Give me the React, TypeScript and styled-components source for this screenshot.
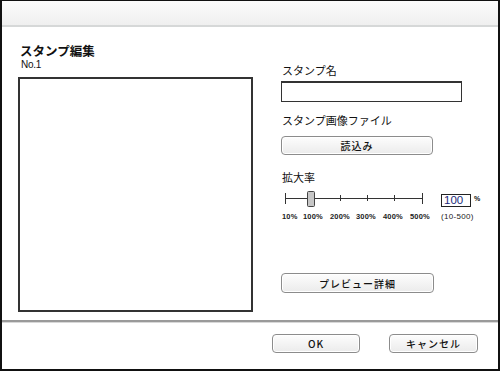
import React from "react";
import styled, { createGlobalStyle } from "styled-components";

const GlobalStyle = createGlobalStyle`
  html, body {
    margin: 0;
    padding: 0;
    background: #ffffff;
  }
  body {
    font-family: "Noto Sans CJK JP", "Liberation Sans", sans-serif;
    color: #111;
  }
`;

const Frame = styled.div`
  width: 500px;
  height: 371px;
  box-sizing: border-box;
  border: 2px solid #111;
  border-top-width: 1px;
  display: flex;
  flex-direction: column;
  background: #fff;
  overflow: hidden;
`;

const TitleBar = styled.div`
  height: 24px;
  flex-shrink: 0;
  background: linear-gradient(#fbfbfb, #efefef);
  border-bottom: 2px solid #d6d8d8;
`;

const Body = styled.div`
  height: 293px;
  flex-shrink: 0;
  display: flex;
  align-items: flex-start;
  padding: 16px 0 0 16px;
  box-sizing: border-box;
`;

const LeftCol = styled.div`
  width: 235px;
  display: flex;
  flex-direction: column;
`;

const Title = styled.div`
  font-size: 12.5px;
  line-height: 14px;
  height: 15px;
  font-weight: 700;
  margin-left: 2px;
  margin-top: 1px;
  overflow: visible;
`;

const SubTitle = styled.div`
  font-family: "Liberation Sans", sans-serif;
  font-size: 10px;
  line-height: 11px;
  margin-left: 3px;
  letter-spacing: -0.3px;
`;

const PreviewBox = styled.div`
  margin-top: 7px;
  width: 235px;
  height: 235px;
  box-sizing: border-box;
  border: 2px solid #333;
  background: #fff;
`;

const RightCol = styled.div`
  margin-left: 28px;
  margin-top: 20px;
  width: 200px;
  display: flex;
  flex-direction: column;
`;

const FieldLabel = styled.div<{ $mt?: number }>`
  font-size: 11px;
  line-height: 14px;
  margin-top: ${(p) => p.$mt ?? 0}px;
  margin-left: 1px;
`;

const TextBox = styled.div`
  margin-top: 4px;
  width: 181px;
  height: 21px;
  box-sizing: border-box;
  border: 1px solid #333;
  border-top-width: 2px;
  background: #fff;
`;

const Button = styled.button<{ $w: number; $h: number; $mt?: number }>`
  width: ${(p) => p.$w}px;
  height: ${(p) => p.$h}px;
  margin-top: ${(p) => p.$mt ?? 0}px;
  padding: 0;
  box-sizing: border-box;
  border: 1px solid #8c8c8c;
  border-radius: 4px;
  background: linear-gradient(#fdfdfd, #ebebeb);
  box-shadow: inset 0 0 0 1px #fff;
  font-family: "Noto Sans CJK JP", "Liberation Sans", sans-serif;
  font-size: 10px;
  font-weight: 500;
  color: #111;
  letter-spacing: 1px;
  display: flex;
  align-items: center;
  justify-content: center;
`;

const ZoomRow = styled.div`
  margin-top: 6px;
  display: flex;
  align-items: flex-start;
`;

const SliderCol = styled.div`
  width: 160px;
  display: flex;
  flex-direction: column;
`;

const TickLabels = styled.div`
  margin-top: 4px;
  display: flex;
  padding-left: 1px;
`;

const TickLabel = styled.span<{ $w: number }>`
  width: ${(p) => p.$w}px;
  font-family: "Liberation Sans", sans-serif;
  font-size: 7.5px;
  line-height: 9px;
  font-weight: 700;
  color: #222;
  letter-spacing: 0.2px;
`;

const ValueCol = styled.div`
  display: flex;
  flex-direction: column;
  padding-top: 4px;
`;

const ValueRow = styled.div`
  display: flex;
  align-items: flex-start;
`;

const ValueBox = styled.div`
  width: 30px;
  height: 13px;
  box-sizing: border-box;
  border: 1px solid #222;
  font-family: "Liberation Sans", sans-serif;
  font-size: 11.5px;
  line-height: 11px;
  color: #1b2a7a;
  padding-left: 2px;
`;

const Percent = styled.span`
  font-family: "Liberation Sans", sans-serif;
  font-size: 7px;
  font-weight: 700;
  margin-left: 3px;
  line-height: 9px;
`;

const Range = styled.div`
  margin-top: 5px;
  font-family: "Liberation Sans", sans-serif;
  font-size: 8px;
  line-height: 9px;
  color: #222;
  letter-spacing: 0.3px;
`;

const Separator = styled.div`
  height: 3px;
  flex-shrink: 0;
  border-top: 2px solid #9a9a9a;
  border-bottom: 1px solid #d8d8d8;
  box-sizing: border-box;
`;

const Footer = styled.div`
  display: flex;
  justify-content: flex-end;
  gap: 29px;
  padding: 11px 20px 0 0;
`;

const Slider = () => (
  <svg width="150" height="18" viewBox="0 0 150 18">
    <line x1="4" y1="8.5" x2="141" y2="8.5" stroke="#333" strokeWidth="1" />
    <line x1="4.5" y1="3" x2="4.5" y2="14" stroke="#333" strokeWidth="1" />
    <line x1="141.5" y1="3" x2="141.5" y2="14" stroke="#333" strokeWidth="1" />
    {[59, 86, 113].map((x) => (
      <line key={x} x1={x + 0.5} y1="5" x2={x + 0.5} y2="11" stroke="#333" strokeWidth="1" />
    ))}
    <rect x="26.5" y="1.5" width="7" height="15" rx="1" fill="#c6c6c6" stroke="#444" strokeWidth="1" />
  </svg>
);

const ticks: [string, number][] = [
  ["10%", 21],
  ["100%", 27],
  ["200%", 26],
  ["300%", 27],
  ["400%", 27],
  ["500%", 27],
];

export default function App() {
  return (
    <>
      <GlobalStyle />
      <Frame>
        <TitleBar />
        <Body>
          <LeftCol>
            <Title>スタンプ編集</Title>
            <SubTitle>No.1</SubTitle>
            <PreviewBox />
          </LeftCol>
          <RightCol>
            <FieldLabel>スタンプ名</FieldLabel>
            <TextBox />
            <FieldLabel $mt={11}>スタンプ画像ファイル</FieldLabel>
            <Button $w={152} $h={19} $mt={9}>読込み</Button>
            <FieldLabel $mt={15}>拡大率</FieldLabel>
            <ZoomRow>
              <SliderCol>
                <Slider />
                <TickLabels>
                  {ticks.map(([t, w]) => (
                    <TickLabel key={t} $w={w}>{t}</TickLabel>
                  ))}
                </TickLabels>
              </SliderCol>
              <ValueCol>
                <ValueRow>
                  <ValueBox>100</ValueBox>
                  <Percent>%</Percent>
                </ValueRow>
                <Range>(10-500)</Range>
              </ValueCol>
            </ZoomRow>
            <Button $w={153} $h={20} $mt={52}>プレビュー詳細</Button>
          </RightCol>
        </Body>
        <Separator />
        <Footer>
          <Button $w={88} $h={19}>OK</Button>
          <Button $w={89} $h={19}>キャンセル</Button>
        </Footer>
      </Frame>
    </>
  );
}
